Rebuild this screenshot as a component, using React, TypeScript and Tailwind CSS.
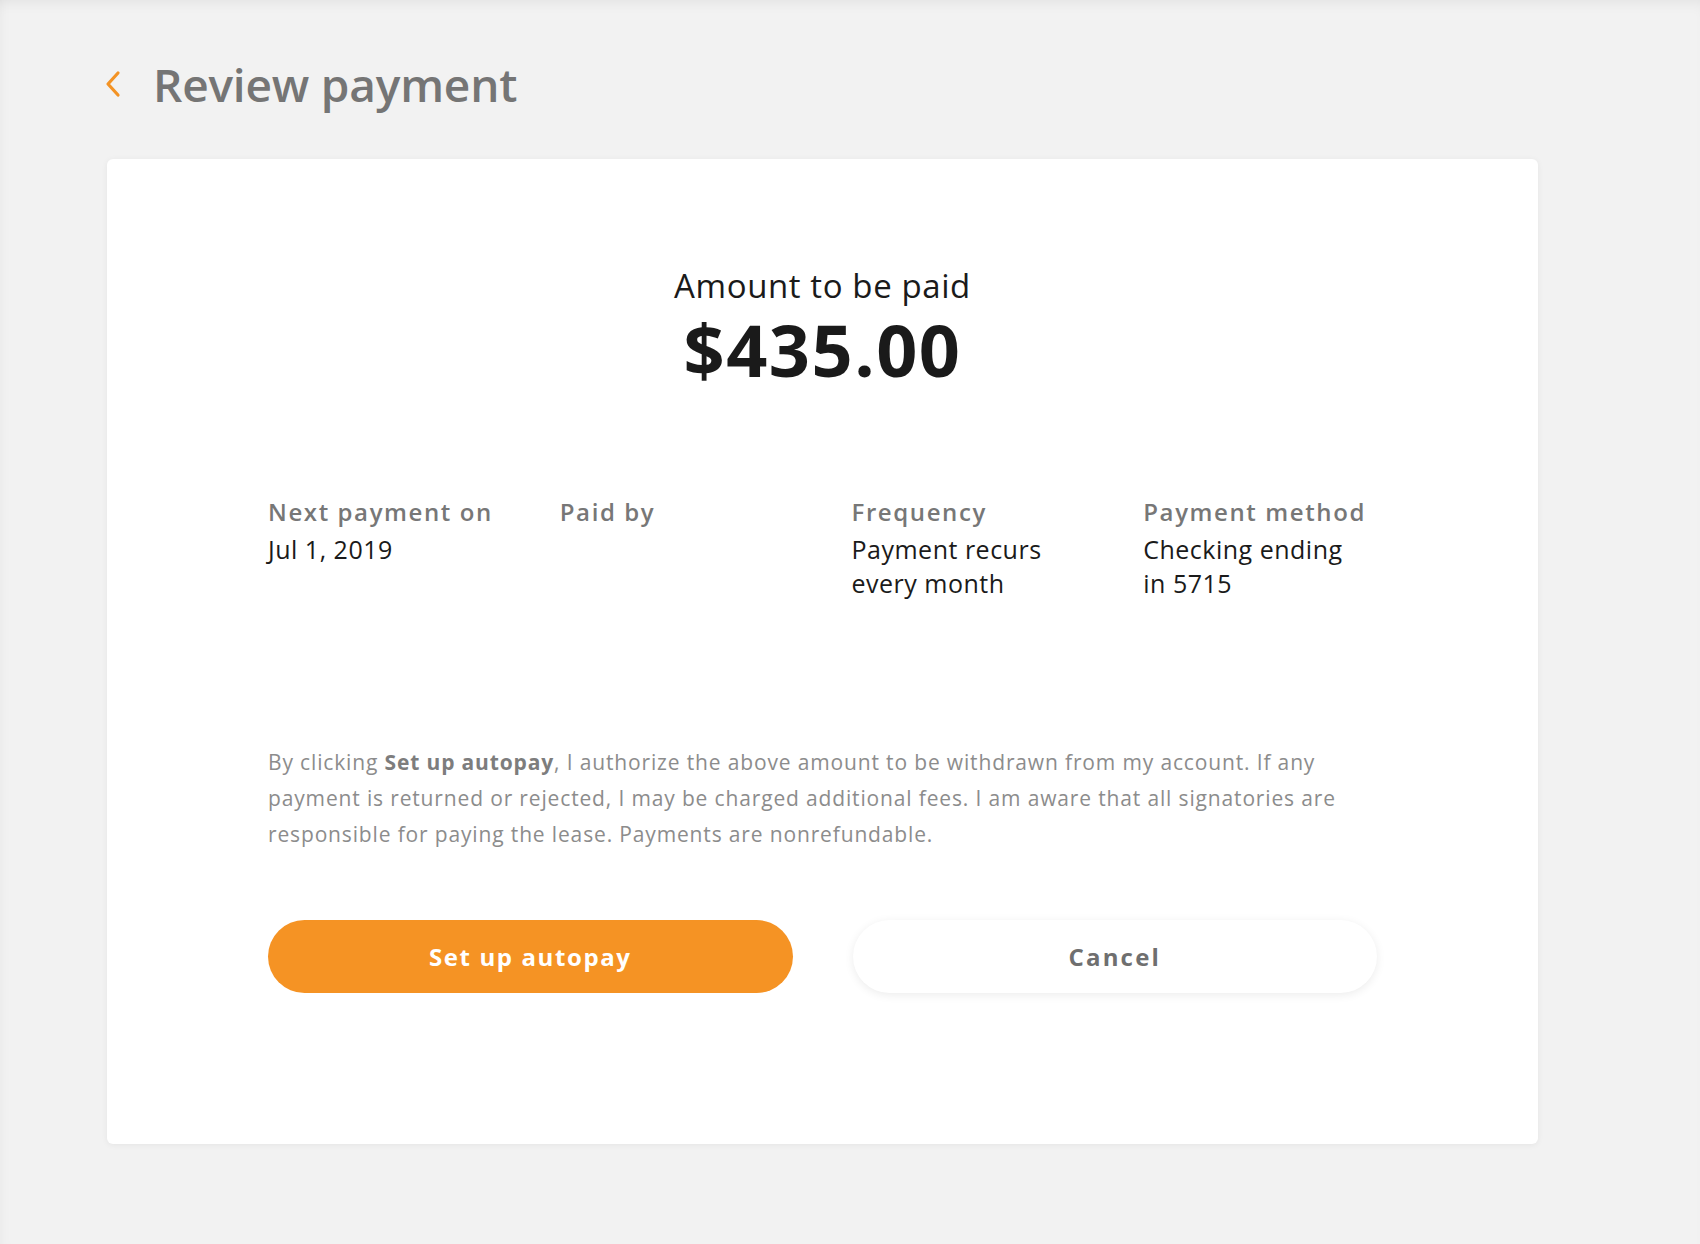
const details = [
  { label: 'Next payment on', value: 'Jul 1, 2019' },
  { label: 'Paid by', value: '' },
  { label: 'Frequency', value: 'Payment recurs every month' },
  { label: 'Payment method', value: 'Checking ending in 5715' },
];

const BackChevron = () => (
  <svg width="18" height="28" viewBox="0 0 18 28" fill="none" className="-ml-[3px]">
    <polyline
      points="14,3 4,14 14,25"
      stroke="#f39325"
      strokeWidth="3.2"
      strokeLinecap="round"
      strokeLinejoin="round"
    />
  </svg>
);

const App = () => {
  return (
    <div
      className="min-h-screen bg-[#f2f2f2] pt-[52px] pb-[99px] pl-[107px] shadow-[inset_0_10px_14px_-8px_rgba(0,0,0,0.07),inset_10px_0_14px_-10px_rgba(0,0,0,0.04)]"
      style={{ fontFamily: '"Open Sans", Lato, sans-serif' }}
    >
      <header className="flex items-center h-[64px]">
        <BackChevron />
        <h1 className="ml-[31px] text-[46px] font-semibold text-[#757575] tracking-[-0.2px] leading-none">
          Review payment
        </h1>
      </header>

      <main className="mt-[43px] w-[1431px] bg-white rounded-[6px] shadow-[0_1px_6px_rgba(0,0,0,0.06)] pt-[107px] pb-[151px] px-[161px]">
        <div className="flex flex-col items-center text-[#1a1a1a]">
          <h2 className="text-[33px] leading-[40px] font-medium tracking-[0.6px]">Amount to be paid</h2>
          <p className="mt-[8px] text-[72px] leading-[70px] font-bold tracking-[1.5px]">$435.00</p>
        </div>

        <div className="mt-[112px] grid grid-cols-4 gap-x-[58px]">
          {details.map((d) => (
            <div key={d.label}>
              <p className="text-[24px] leading-[32px] font-semibold text-[#777777] tracking-[1.6px]">
                {d.label}
              </p>
              <p className="mt-[4px] max-w-[220px] text-[25px] leading-[34px] text-[#1a1a1a] tracking-[0.5px]">
                {d.value}
              </p>
            </div>
          ))}
        </div>

        <p className="mt-[144px] text-[21px] leading-[36px] text-[#8c8c8c] tracking-[0.85px]">
          By clicking <span className="font-bold text-[#7d7d7d]">Set up autopay</span>, I authorize the above
          amount to be withdrawn from my account. If any payment is returned or rejected, I may be charged
          additional fees. I am aware that all signatories are responsible for paying the lease. Payments
          are nonrefundable.
        </p>

        <div className="mt-[68px] grid grid-cols-2 gap-x-[60px]">
          <button className="h-[73px] rounded-full bg-[#f59324] text-white text-[24px] font-bold tracking-[1.6px]">
            Set up autopay
          </button>
          <button className="h-[73px] rounded-full bg-white text-[#6f6f6f] text-[24px] font-bold tracking-[2.2px] shadow-[0_2px_10px_rgba(0,0,0,0.08)]">
            Cancel
          </button>
        </div>
      </main>
    </div>
  );
};

export default App;
